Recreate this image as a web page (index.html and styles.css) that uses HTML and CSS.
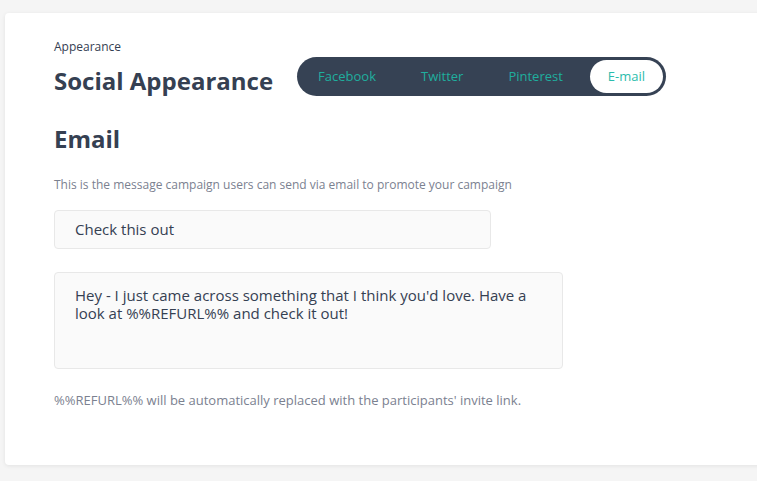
FILE: index.html
```html
<!DOCTYPE html>
<html>
<head>
<meta charset="utf-8">
<link rel="stylesheet" href="styles.css">
</head>
<body>
<div class="card">
  <div class="header">
    <div class="titles">
      <div class="crumb">Appearance</div>
      <h1 class="title">Social Appearance</h1>
    </div>
    <div class="tabs">
      <span class="tab">Facebook</span>
      <span class="tab">Twitter</span>
      <span class="tab">Pinterest</span>
      <span class="tab active">E-mail</span>
    </div>
  </div>
  <h2 class="section">Email</h2>
  <p class="desc">This is the message campaign users can send via email to promote your campaign</p>
  <div class="input">Check this out</div>
  <div class="textarea">Hey - I just came across something that I think you'd love. Have a look at %%REFURL%% and check it out!</div>
  <p class="note">%%REFURL%% will be automatically replaced with the participants' invite link.</p>
</div>
</body>
</html>
```
FILE: styles.css
```css
html, body {
  margin: 0;
  padding: 0;
  background: #f5f5f5;
  overflow: hidden;
  height: 481px;
}
body {
  font-family: "Open Sans", "Noto Sans", sans-serif;
  color: #354052;
}
.card {
  margin: 13px 0 0 5px;
  width: 800px;
  height: 452px;
  box-sizing: border-box;
  background: #fff;
  border-radius: 4px;
  box-shadow: 0 1px 4px rgba(0,0,0,0.08);
  padding: 26px 0 0 49px;
}
.header {
  display: flex;
  align-items: flex-end;
}
.crumb {
  font-size: 12px;
  line-height: 16px;
  color: #354052;
}
.title {
  margin: 10px 0 0;
  font-size: 24px;
  line-height: 32px;
  font-weight: 700;
  color: #354052;
}
.tabs {
  margin-left: 24px;
  margin-bottom: 1px;
  display: flex;
  gap: 9px;
  background: #364254;
  border-radius: 20px;
  padding: 3px;
}
.tab {
  font-size: 13px;
  line-height: 33px;
  padding: 0 18px;
  color: #1fae9e;
  border-radius: 17px;
}
.tab.active {
  background: #fff;
  color: #2bbcac;
}
.section {
  margin: 26px 0 0;
  font-size: 24px;
  line-height: 32px;
  font-weight: 700;
}
.desc {
  margin: 22px 0 0;
  font-size: 12px;
  line-height: 16px;
  color: #7b8190;
}
.input {
  margin-top: 17px;
  width: 437px;
  height: 39px;
  box-sizing: border-box;
  background: #fafafa;
  border: 1px solid #e8e8e8;
  border-radius: 4px;
  padding: 0 20px;
  font-size: 15px;
  line-height: 37px;
  color: #354052;
}
.textarea {
  margin-top: 23px;
  width: 509px;
  height: 97px;
  box-sizing: border-box;
  background: #fafafa;
  border: 1px solid #e8e8e8;
  border-radius: 4px;
  padding: 13px 20px;
  font-size: 15px;
  line-height: 18px;
  color: #354052;
}
.note {
  margin: 22px 0 0;
  font-size: 13px;
  line-height: 18px;
  color: #7b8190;
}
```
